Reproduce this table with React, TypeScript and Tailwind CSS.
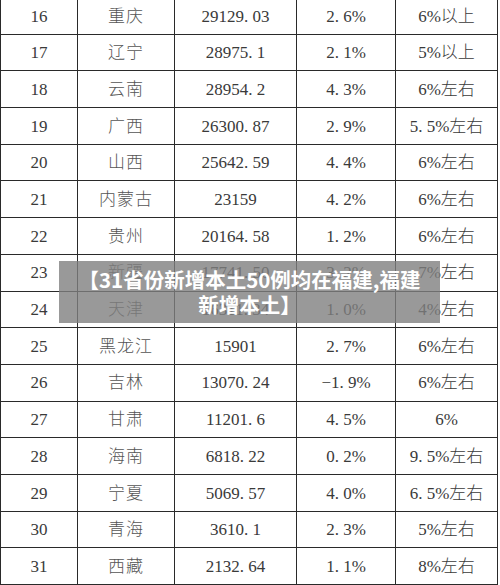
import React from "react";

const rows: [string, string, string, string, string][] = [
  ["16", "重庆", "29129. 03", "2. 6%", "6%以上"],
  ["17", "辽宁", "28975. 1", "2. 1%", "5%以上"],
  ["18", "云南", "28954. 2", "4. 3%", "6%左右"],
  ["19", "广西", "26300. 87", "2. 9%", "5. 5%左右"],
  ["20", "山西", "25642. 59", "4. 4%", "6%左右"],
  ["21", "内蒙古", "23159", "4. 2%", "6%左右"],
  ["22", "贵州", "20164. 58", "1. 2%", "6%左右"],
  ["23", "新疆", "17741. 50", "3. 2%", "7%左右"],
  ["24", "天津", "16311. 34", "1. 0%", "4%左右"],
  ["25", "黑龙江", "15901", "2. 7%", "6%左右"],
  ["26", "吉林", "13070. 24", "−1. 9%", "6%左右"],
  ["27", "甘肃", "11201. 6", "4. 5%", "6%"],
  ["28", "海南", "6818. 22", "0. 2%", "9. 5%左右"],
  ["29", "宁夏", "5069. 57", "4. 0%", "6. 5%左右"],
  ["30", "青海", "3610. 1", "2. 3%", "5%左右"],
  ["31", "西藏", "2132. 64", "1. 1%", "8%左右"],
];

export default function App() {
  return (
    <div className="relative w-[500px] h-[585px] overflow-hidden bg-white">
      <div
        className="mt-[-2px] w-[498px] text-[17px] text-[#3a3a3a] font-light"
        style={{ fontFamily: '"Liberation Serif", "Noto Sans CJK SC", serif' }}
      >
        {rows.map((r) => (
          <div
            key={r[0]}
            className="grid grid-cols-[77px_97px_122px_99px_103px] h-[36.7px] border-b border-[#2a2a2a]"
          >
            {r.map((c, i) => (
              <div
                key={i}
                className={
                  "flex items-center justify-center pt-[1px] whitespace-pre border-l border-[#2a2a2a] " +
                  (i === 1 ? "text-[#555] tracking-[1px] " : "") +
                  (i === 4 ? "border-r" : "")
                }
              >
                {c}
              </div>
            ))}
          </div>
        ))}
      </div>
      <div
        className="absolute left-[59px] top-[261px] w-[381px] h-[62px] bg-[rgba(128,128,128,0.8)] flex flex-col items-center justify-center text-white font-bold text-[20.5px] leading-[25px]"
        style={{ fontFamily: '"Noto Sans CJK SC", "Noto Sans", sans-serif' }}
      >
        <span>【31省份新增本土50例均在福建,福建</span>
        <span>新增本土】</span>
      </div>
    </div>
  );
}
